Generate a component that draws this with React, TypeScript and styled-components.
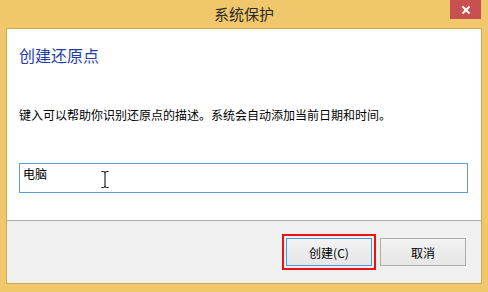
import React from "react";
import styled, { createGlobalStyle } from "styled-components";

const Global = createGlobalStyle`
  html, body { margin: 0; padding: 0; background: #f0c76b; }
  body { font-family: "Noto Sans CJK SC", "Noto Sans", sans-serif; }
`;

const Window = styled.div`
  position: relative;
  width: 488px;
  height: 292px;
  box-sizing: border-box;
  background: #f0c76b;
  display: flex;
  flex-direction: column;
  padding: 0 6px 8px 6px;
`;

const TitleBar = styled.div`
  height: 28px;
  display: flex;
  align-items: center;
  justify-content: center;
  font-size: 15px;
  color: #2b2b2b;
  line-height: 28px;
`;

const CloseButton = styled.div`
  position: absolute;
  top: 0;
  right: 7px;
  width: 31px;
  height: 19px;
  background: #c75050;
  display: flex;
  align-items: center;
  justify-content: center;
`;

const Client = styled.div`
  flex: 1;
  display: flex;
  flex-direction: column;
  border: 1px solid #d2a74f;
  background: #ffffff;
`;

const Body = styled.div`
  height: 191px;
  box-sizing: border-box;
  padding: 0 13px 0 12px;
  display: flex;
  flex-direction: column;
  background: #ffffff;
`;

const Heading = styled.div`
  margin-top: 15px;
  font-size: 16px;
  line-height: 22px;
  color: #1f3ea6;
`;

const Description = styled.div`
  margin-top: 41px;
  font-size: 12px;
  line-height: 16px;
  color: #000;
`;

const TextBox = styled.div`
  position: relative;
  margin-top: 40px;
  height: 30px;
  box-sizing: border-box;
  border: 1px solid #5c9bdc;
  padding: 1px 3px;
  font-size: 12px;
  line-height: 18px;
  color: #000;
`;

const Cursor = styled.svg`
  position: absolute;
  left: 81px;
  top: 7px;
`;

const Footer = styled.div`
  flex: 1;
  border-top: 1px solid #a9a9a9;
  background: #f0f0f0;
  display: flex;
  align-items: center;
  justify-content: flex-end;
  gap: 8px;
  padding-right: 15px;
`;

const Button = styled.div<{ $default?: boolean }>`
  width: 86px;
  height: 28px;
  box-sizing: border-box;
  display: flex;
  align-items: center;
  justify-content: center;
  font-size: 12px;
  color: #000;
  background: linear-gradient(#f2f2f2, #e6e6e6);
  border: 1px solid ${(p) => (p.$default ? "#4a9be6" : "#acacac")};
  outline: ${(p) => (p.$default ? "2px solid #ee1111" : "none")};
  outline-offset: 2px;
`;

export default function App() {
  return (
    <>
      <Global />
      <Window>
        <TitleBar>系统保护</TitleBar>
        <CloseButton>
          <svg width="10" height="10" viewBox="0 0 10 10">
            <path d="M1.5 1.5 L8.5 8.5 M8.5 1.5 L1.5 8.5" stroke="#fff" strokeWidth="2" />
          </svg>
        </CloseButton>
        <Client>
          <Body>
            <Heading>创建还原点</Heading>
            <Description>键入可以帮助你识别还原点的描述。系统会自动添加当前日期和时间。</Description>
            <TextBox>
              电脑
              <Cursor width="8" height="17" viewBox="0 0 8 17">
                <path d="M0.5 0.5 H2.5 Q4 0.5 4 2 V15 Q4 16.5 2.5 16.5 H0.5 M7.5 0.5 H5.5 Q4 0.5 4 2 M4 15 Q4 16.5 5.5 16.5 H7.5" stroke="#000" strokeWidth="1" fill="none" />
              </Cursor>
            </TextBox>
          </Body>
          <Footer>
            <Button $default>创建(C)</Button>
            <Button>取消</Button>
          </Footer>
        </Client>
      </Window>
    </>
  );
}
